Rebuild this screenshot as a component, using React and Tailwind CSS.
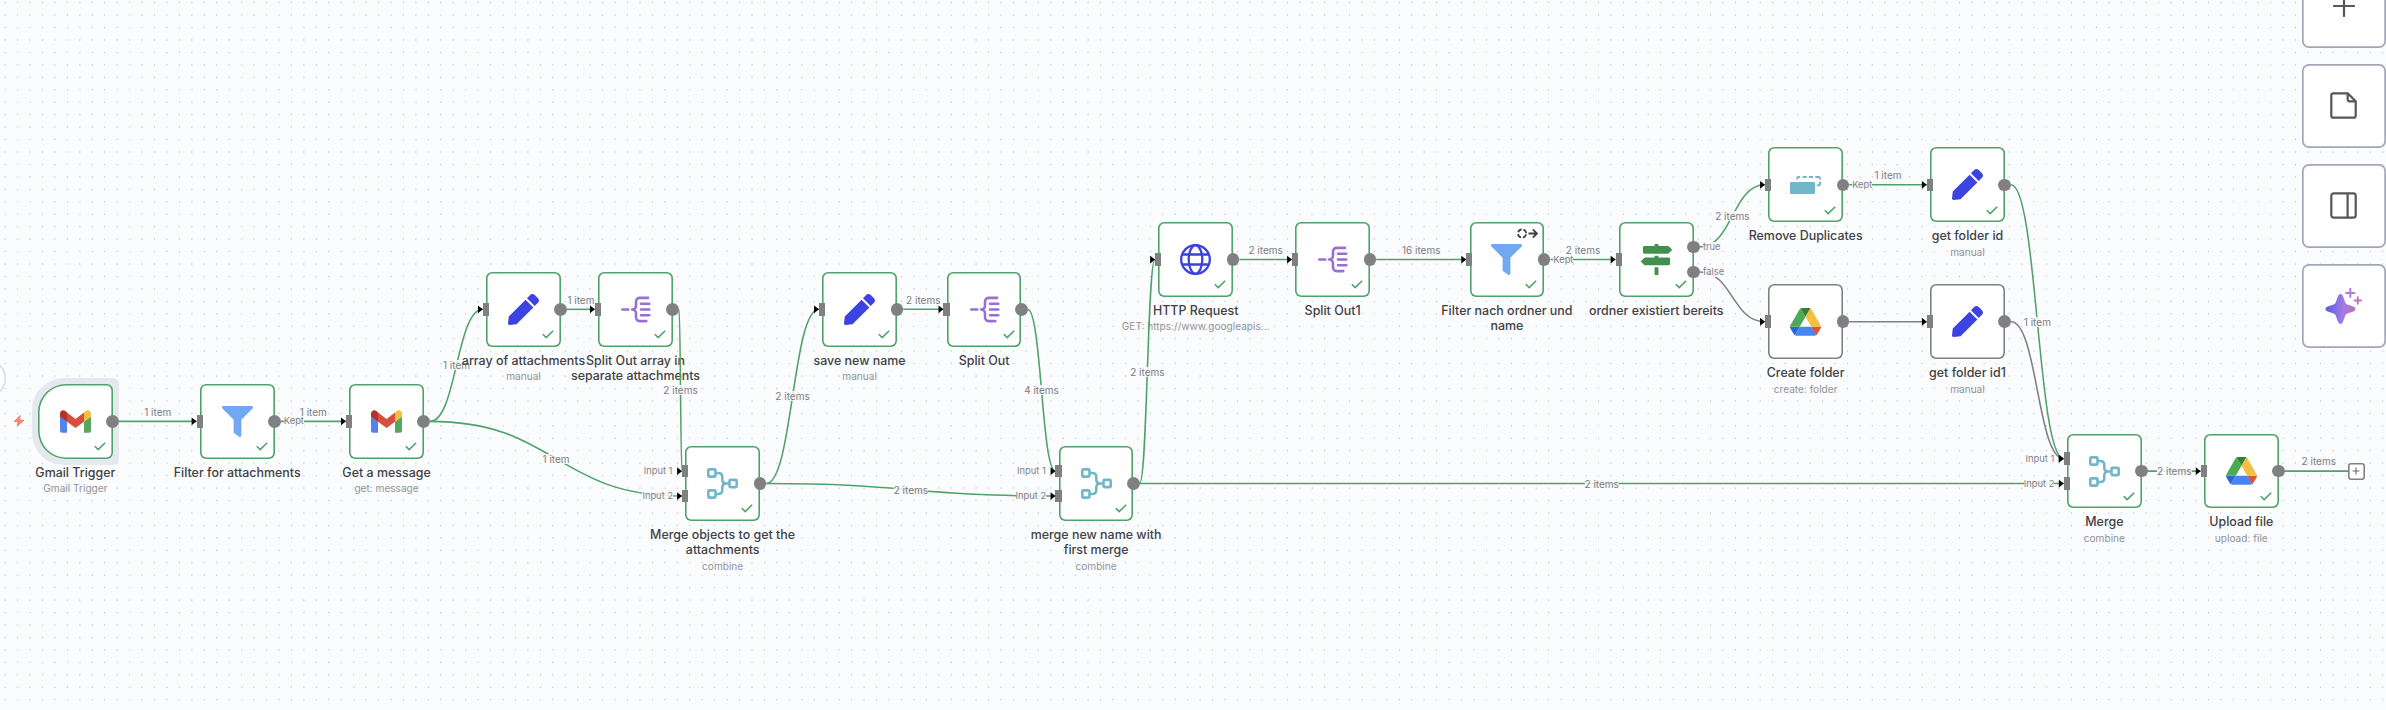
import { FaFilter, FaMapSigns, FaPen } from "react-icons/fa";

const U = 12.448;
const X0 = 38;
const Y0 = 384;
const SIZE = 74.7;
const GREEN = "#4fa268";
const GRAY = "#808083";

const NODES = [
  { id: "trigger", gx: 0, gy: 0, icon: "gmail", title: ["Gmail Trigger"], sub: "Gmail Trigger", trigger: true },
  { id: "filter", gx: 13, gy: 0, icon: "filter", title: ["Filter for attachments"] },
  { id: "get", gx: 25, gy: 0, icon: "gmail", title: ["Get a message"], sub: "get: message" },
  { id: "array", gx: 36, gy: -9, icon: "pen", title: ["array of attachments"], sub: "manual", raised: true },
  { id: "splitArr", gx: 45, gy: -9, icon: "split", title: ["Split Out array in", "separate attachments"] },
  { id: "merge1", gx: 52, gy: 5, icon: "merge", title: ["Merge objects to get the", "attachments"], sub: "combine", inputs: 2 },
  { id: "save", gx: 63, gy: -9, icon: "pen", title: ["save new name"], sub: "manual" },
  { id: "splitOut", gx: 73, gy: -9, icon: "split", title: ["Split Out"] },
  { id: "merge2", gx: 82, gy: 5, icon: "merge", title: ["merge new name with", "first merge"], sub: "combine", inputs: 2 },
  { id: "http", gx: 90, gy: -13, icon: "globe", title: ["HTTP Request"], sub: "GET: https://www.googleapis..." },
  { id: "split1", gx: 101, gy: -13, icon: "split", title: ["Split Out1"] },
  { id: "filter2", gx: 115, gy: -13, icon: "filter", title: ["Filter nach ordner und", "name"], always: true },
  { id: "cond", gx: 127, gy: -13, icon: "signs", title: ["ordner existiert bereits"], outputs: 2 },
  { id: "dedupe", gx: 139, gy: -19, icon: "dedupe", title: ["Remove Duplicates"] },
  { id: "folderId", gx: 152, gy: -19, icon: "pen", title: ["get folder id"], sub: "manual" },
  { id: "create", gx: 139, gy: -8, icon: "drive", title: ["Create folder"], sub: "create: folder", idle: true },
  { id: "folderId1", gx: 152, gy: -8, icon: "pen", title: ["get folder id1"], sub: "manual", idle: true },
  { id: "merge3", gx: 163, gy: 4, icon: "merge", title: ["Merge"], sub: "combine", inputs: 2 },
  { id: "upload", gx: 174, gy: 4, icon: "drive", title: ["Upload file"], sub: "upload: file" },
].map((n) => ({ ...n, x: X0 + n.gx * U, y: Y0 + n.gy * U }));

const byId = Object.fromEntries(NODES.map((n) => [n.id, n]));

const EDGES = [
  { from: "trigger", to: "filter", label: "1 item", above: true },
  { from: "filter", to: "get", label: "1 item", above: true },
  { from: "get", to: "array", label: "1 item" },
  { from: "get", to: "merge1", input: 1, label: "1 item" },
  { from: "array", to: "splitArr", label: "1 item", above: true },
  { from: "splitArr", to: "merge1", input: 0, label: "2 items" },
  { from: "merge1", to: "save", label: "2 items" },
  { from: "merge1", to: "merge2", input: 1, label: "2 items" },
  { from: "save", to: "splitOut", label: "2 items", above: true },
  { from: "splitOut", to: "merge2", input: 0, label: "4 items" },
  { from: "merge2", to: "http", label: "2 items" },
  { from: "merge2", to: "merge3", input: 1, label: "2 items" },
  { from: "http", to: "split1", label: "2 items", above: true },
  { from: "split1", to: "filter2", label: "16 items", above: true },
  { from: "filter2", to: "cond", label: "2 items", above: true },
  { from: "cond", output: 0, to: "dedupe", label: "2 items" },
  { from: "cond", output: 1, to: "create", idle: true },
  { from: "dedupe", to: "folderId", label: "1 item", above: true },
  { from: "create", to: "folderId1", idle: true },
  { from: "folderId1", to: "merge3", input: 0, idle: true },
  { from: "folderId", to: "merge3", input: 0, label: "1 item" },
  { from: "merge3", to: "upload", label: "2 items" },
].map((e) => {
  const s = byId[e.from];
  const t = byId[e.to];
  const sx = s.x + SIZE + 6.2;
  const sy = s.y + SIZE / 2 + (e.output === undefined ? 0 : e.output ? U : -U);
  const tx = t.x - 3.3;
  const ty = t.y + SIZE / 2 + (e.input === undefined ? 0 : e.input ? U : -U);
  const mx = (sx + tx) / 2;
  return { ...e, sx, sy, tx, ty, mx, my: (sy + ty) / 2, d: `M${sx},${sy} C${mx},${sy} ${mx},${ty} ${tx},${ty}` };
});

const HANDLE_LABELS = [
  { text: "Kept", x: 283.8, y: 421.3 },
  { text: "Kept", x: 1553.3, y: 259.5 },
  { text: "Kept", x: 1852.2, y: 184.7 },
  { text: "true", x: 1703, y: 247 },
  { text: "false", x: 1703, y: 271.9 },
  { text: "Input 1", x: 643.7, y: 471 },
  { text: "Input 2", x: 642.4, y: 496 },
  { text: "Input 1", x: 1017, y: 471 },
  { text: "Input 2", x: 1015.6, y: 496 },
  { text: "Input 1", x: 2025.5, y: 458.6 },
  { text: "Input 2", x: 2023.8, y: 483.5 },
];

function Gmail() {
  return (
    <svg viewBox="0 0 31 23" className="h-[23px] w-[31px]">
      <path d="M0 6.5 7 11.5V22.7H2A2 2 0 0 1 0 20.7Z" fill="#5384ee" />
      <path d="M31 6.5 24 11.5V22.7H29A2 2 0 0 0 31 20.7Z" fill="#57a65b" />
      <path d="M24 3 24 11.8 31 6.7V3.4C31 .6 27.6-1 25.3 1.2Z" fill="#f2bf42" />
      <path d="M7 11.8V2.6L15.5 8.9 24 2.6V11.8L15.5 18Z" fill="#d94f3d" />
      <path d="M0 3.4V6.7L7 11.8V2.6L5.7 1.2C3.4-1 0 .6 0 3.4Z" fill="#b43328" />
    </svg>
  );
}

function Drive() {
  return (
    <svg viewBox="0 0 87.3 78" className="h-[27.7px] w-[31px]">
      <path d="m6.6 66.85 3.85 6.65c.8 1.4 1.95 2.5 3.3 3.3l13.75-23.8h-27.5c0 1.55.4 3.1 1.2 4.5z" fill="#2c66cf" />
      <path d="m43.65 25-13.75-23.8c-1.35.8-2.5 1.9-3.3 3.3l-25.4 44a9.06 9.06 0 0 0 -1.2 4.5h27.5z" fill="#4ea954" />
      <path d="m73.55 76.8c1.35-.8 2.5-1.9 3.3-3.3l1.6-2.75 7.65-13.25c.8-1.4 1.2-2.95 1.2-4.5h-27.502l5.852 11.5z" fill="#dc5240" />
      <path d="m43.65 25 13.75-23.8c-1.35-.8-2.9-1.2-4.5-1.2h-18.5c-1.6 0-3.15.45-4.5 1.2z" fill="#34803a" />
      <path d="m59.8 53h-32.3l-13.75 23.8c1.35.8 2.9 1.2 4.5 1.2h50.8c1.6 0 3.15-.45 4.5-1.2z" fill="#4686f2" />
      <path d="m73.4 26.5-12.7-22c-.8-1.4-1.95-2.5-3.3-3.3l-13.75 23.8 16.15 28h27.45c0-1.55-.4-3.1-1.2-4.5z" fill="#f6bf42" />
    </svg>
  );
}

function Split() {
  return (
    <svg viewBox="0 0 31 31" className="size-[31px]" fill="none" stroke="#9870d2" strokeWidth="2.6" strokeLinecap="round" strokeLinejoin="round">
      <path d="M2.3 15.5H8.3M28 3.9H19.8C17.6 3.9 16 5.5 16 7.7V11.5C16 13.7 14.4 15.5 12.2 15.5C14.4 15.5 16 17.3 16 19.5V23.3C16 25.5 17.6 27.1 19.8 27.1H26.3M21 9.7H29.3M21 15.5H29.3M21 21.3H29.3" />
    </svg>
  );
}

function Merge() {
  return (
    <svg viewBox="0 0 31 31" className="size-[31px]" fill="none" stroke="#72b7c9" strokeWidth="2.6" strokeLinejoin="round">
      <rect x="1.3" y="1.4" width="7.2" height="7.2" rx="1" />
      <rect x="1.3" y="22.4" width="7.2" height="7.2" rx="1" />
      <rect x="22.5" y="11.9" width="7.2" height="7.2" rx="1" />
      <path d="M8.4 5H11.2C13.8 5 15.3 6.5 15.3 9V11.5C15.3 14 16.9 15.5 19.5 15.5H22.6M8.4 26H11.2C13.8 26 15.3 24.5 15.3 22V19.5C15.3 17 16.9 15.5 19.5 15.5" />
    </svg>
  );
}

function Globe() {
  return (
    <svg viewBox="0 0 31 31" className="size-[31px]" fill="none" stroke="#3b41e0" strokeWidth="2.3">
      <circle cx="15.5" cy="15.5" r="14.3" />
      <ellipse cx="15.5" cy="15.5" rx="6.8" ry="14.3" />
      <path d="M2 10.5H29M2 20.5H29" />
    </svg>
  );
}

function Dedupe() {
  return (
    <svg viewBox="0 0 31 18" className="h-[18px] w-[31px]" fill="none">
      <rect x="0" y="6" width="25" height="12" rx="1.2" fill="#72b7c9" />
      <path d="M7.2 3.6V2.2Q7.2 1 8.4 1H10.2M12.7 1H16.7M19 1H23M25.3 1H28.8Q30 1 30 2.2V3.6M30 5.7V8Q30 9.3 28.8 9.3H27" stroke="#72b7c9" strokeWidth="2" />
    </svg>
  );
}

function NodeIcon({ name }) {
  if (name === "gmail") return <Gmail />;
  if (name === "filter") return <FaFilter className="size-[31px] text-[#71a8f1]" />;
  if (name === "pen") return <FaPen className="size-[31px] text-[#3d43e0]" />;
  if (name === "split") return <Split />;
  if (name === "merge") return <Merge />;
  if (name === "globe") return <Globe />;
  if (name === "signs") return <FaMapSigns className="size-[31px] text-[#41904e]" />;
  if (name === "dedupe") return <Dedupe />;
  return <Drive />;
}

function Node({ node }) {
  const outline = node.idle ? "shadow-[inset_0_0_0_1.6px_#808083]" : "shadow-[inset_0_0_0_1.6px_#4fa268]";
  const shape = node.trigger ? "rounded-l-[28px] rounded-r-[6.2px]" : "rounded-[6.2px]";
  const outs = node.outputs === 2 ? [-U, U] : [0];
  const ins = node.trigger ? [] : node.inputs === 2 ? [-U, U] : [0];
  return (
    <div className="absolute" style={{ left: node.x, top: node.y }}>
      {node.trigger && <div className="absolute -inset-[6.2px] rounded-l-[32px] rounded-r-[6.2px] bg-[#e6e8f0]" />}
      <div className={`relative flex size-[74.7px] items-center justify-center bg-white ${outline} ${shape}`}>
        <NodeIcon name={node.icon} />
        {!node.idle && (
          <svg viewBox="0 0 12 9" className="absolute right-[6.8px] bottom-[7.6px] h-[9px] w-[12px]" fill="none" stroke={GREEN} strokeWidth="1.6">
            <path d="M.8 4.2 4.2 7.6 11.2.8" />
          </svg>
        )}
        {node.always && (
          <svg viewBox="0 0 21 11" className="absolute top-[6.2px] right-[6.4px] h-[11px] w-[21px]" fill="none" stroke="#3f4045" strokeWidth="1.8">
            <circle cx="5.1" cy="5.5" r="4.1" strokeDasharray="4.55 1.89" strokeDashoffset="-0.95" />
            <path d="M11.5 5.5H19.6M15.8 1.4 19.9 5.5 15.8 9.6" />
          </svg>
        )}
      </div>
      {ins.map((dy) => (
        <div key={dy} className="absolute h-[12.6px] w-[6.2px] bg-[#808083]" style={{ left: -3.3, top: SIZE / 2 + dy - 6.3 }} />
      ))}
      {outs.map((dy) => (
        <div key={dy} className="absolute size-[12.6px] rounded-full bg-[#808083]" style={{ left: SIZE - 6.4, top: SIZE / 2 + dy - 6.3 }} />
      ))}
      <div className={`absolute top-[80.6px] left-[-62.65px] w-[200px] text-center ${node.raised ? "z-10" : ""}`}>
        {node.title.map((line) => (
          <div key={line} className="text-[12.45px] leading-[15.6px] font-[460] whitespace-nowrap text-[#414245]">{line}</div>
        ))}
        {node.sub && <div className="mt-[2px] text-[10.1px] leading-[13px] whitespace-nowrap text-[#929397]">{node.sub}</div>}
      </div>
    </div>
  );
}

function ToolButton({ children }) {
  return (
    <button className="flex size-[83.4px] shrink-0 items-center justify-center rounded-[7px] bg-white shadow-[inset_0_0_0_1.7px_#a3a7b5]">
      {children}
    </button>
  );
}

export default function App() {
  const plusY = byId.upload.y + SIZE / 2;
  return (
    <div className="relative h-[710px] w-[2386px] overflow-hidden bg-[#fbfcfe] font-[Inter,sans-serif]">
      <svg className="absolute inset-0" width="2386" height="710" fill="none">
        <defs>
          <pattern id="dots" x="-1.1" y="-3.6" width={U} height={U} patternUnits="userSpaceOnUse">
            <circle cx="6.22" cy="6.22" r="0.65" fill="#b9bbc4" />
          </pattern>
        </defs>
        <rect width="2386" height="710" fill="url(#dots)" />
      </svg>

      <div className="absolute top-[359px] left-[-33px] size-[39px] rounded-full bg-white shadow-[inset_0_0_0_1.6px_#d9dbe6]" />
      <svg viewBox="0 0 12 12" className="absolute top-[414.6px] left-[13.4px] size-[12px]">
        <path d="M7.1.6 1 6.6H5.1L4.2 11.2 11 5.2H6.6Z" fill="#ee8575" stroke="#ee8575" strokeWidth="1" strokeLinejoin="round" />
      </svg>

      {NODES.map((n) => (
        <Node key={n.id} node={n} />
      ))}

      <svg className="absolute inset-0" width="2386" height="710" fill="none">
        {EDGES.map((e) => (
          <g key={e.from + e.to}>
            <path d={e.d} stroke={e.idle ? GRAY : GREEN} strokeWidth="1.56" />
            <path d={`M${e.tx - 4.9},${e.ty - 3.9} L${e.tx},${e.ty} L${e.tx - 4.9},${e.ty + 3.9}Z`} fill="#000" />
          </g>
        ))}
        <path d={`M${byId.upload.x + SIZE + 6.2},${plusY}H2348`} stroke={GREEN} strokeWidth="1.56" />
      </svg>

      {HANDLE_LABELS.map((l) => (
        <div key={l.text + l.x} className="absolute -translate-y-1/2 bg-[#fbfcfe]/85 text-[9.33px] leading-[10px] whitespace-nowrap text-[#7e8086]" style={{ left: l.x, top: l.y }}>
          {l.text}
        </div>
      ))}
      {EDGES.filter((e) => e.label).map((e) => (
        <div
          key={e.from + e.to}
          className="absolute -translate-x-1/2 -translate-y-1/2 bg-[#fbfcfe]/85 text-[10px] leading-[10px] whitespace-nowrap text-[#7a7b80]"
          style={{ left: e.mx, top: e.my - (e.above ? 9.8 : 0) }}
        >
          {e.label}
        </div>
      ))}
      <div className="absolute -translate-x-1/2 -translate-y-1/2 text-[10px] leading-[10px] whitespace-nowrap text-[#7a7b80]" style={{ left: 2318.8, top: plusY - 9.8 }}>
        2 items
      </div>
      <div className="absolute top-[462.6px] left-[2347.6px] flex size-[17px] items-center justify-center rounded-[3px] bg-white shadow-[inset_0_0_0_1.6px_#808083]">
        <svg viewBox="0 0 8 8" className="size-[8px]" stroke="#6b6c70" strokeWidth="1.1">
          <path d="M4 .6V7.4M.6 4H7.4" />
        </svg>
      </div>

      <div className="absolute top-[-35.8px] left-[2302.2px] flex flex-col gap-[16.6px]">
        <ToolButton>
          <svg viewBox="0 0 22 22" className="size-[22px]" stroke="#565657" strokeWidth="2.2" strokeLinecap="round">
            <path d="M11 1V21M1 11H21" />
          </svg>
        </ToolButton>
        <ToolButton>
          <svg viewBox="0 0 27 27" className="size-[27px]" fill="none" stroke="#565657" strokeWidth="2.2" strokeLinejoin="round">
            <path d="M17.7 1.3H3.3A2 2 0 0 0 1.3 3.3V23.7A2 2 0 0 0 3.3 25.7H23.7A2 2 0 0 0 25.7 23.7V9.3ZM17.7 1.3V7.3A2 2 0 0 0 19.7 9.3H25.7" />
          </svg>
        </ToolButton>
        <ToolButton>
          <svg viewBox="0 0 27 27" className="size-[27px]" fill="none" stroke="#565657" strokeWidth="2.2">
            <rect x="1.3" y="1.3" width="24.4" height="24.4" rx="2.4" />
            <path d="M17.6 1.3V25.7" />
          </svg>
        </ToolButton>
        <ToolButton>
          <svg viewBox="0 0 37 36" className="h-[36px] w-[37px]">
            <defs>
              <linearGradient id="spark" gradientUnits="userSpaceOnUse" x1="1" y1="20" x2="37" y2="22">
                <stop offset="0" stopColor="#5b60e8" />
                <stop offset="0.5" stopColor="#a77be0" />
                <stop offset="1" stopColor="#cb6f9c" />
              </linearGradient>
            </defs>
            <path d="M15.5 6C16.8 6 17.5 7 18 8.2L20.3 14.4Q20.9 16 22.5 16.6L28.3 18.6C29.7 19.1 30.5 19.9 30.5 21S29.7 22.9 28.3 23.4L22.5 25.4Q20.9 26 20.3 27.6L18 33.8C17.5 35 16.8 36 15.5 36S13.5 35 13 33.8L10.7 27.6Q10.1 26 8.5 25.4L2.7 23.4C1.3 22.9.5 22.1.5 21S1.3 19.1 2.7 18.6L8.5 16.6Q10.1 16 10.7 14.4L13 8.2C13.5 7 14.2 6 15.5 6Z" fill="url(#spark)" />
            <path d="M25.3.8V9M21.2 4.9H29.4" stroke="#b07bdc" strokeWidth="2" strokeLinecap="round" />
            <path d="M32.8 9.3V15.7M29.6 12.5H36" stroke="#c574b0" strokeWidth="2" strokeLinecap="round" />
          </svg>
        </ToolButton>
      </div>
    </div>
  );
}
